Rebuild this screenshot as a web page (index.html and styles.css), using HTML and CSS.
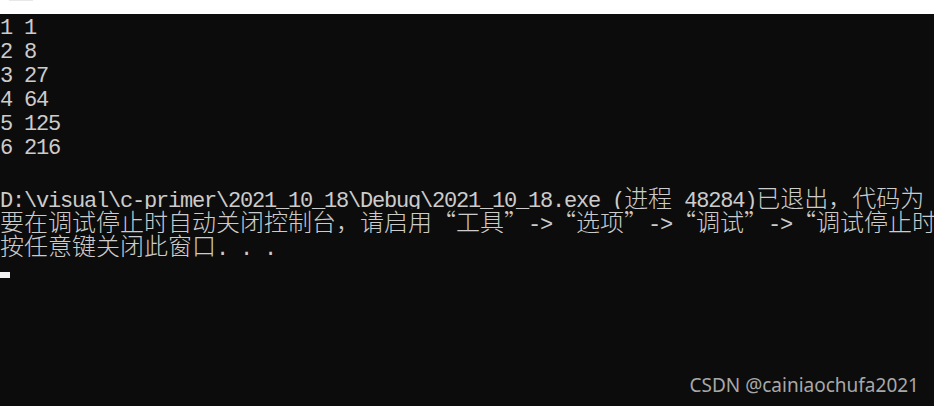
FILE: index.html
```html
<!DOCTYPE html>
<html lang="zh-CN">
<head>
<meta charset="utf-8">
<title>Console</title>
<link rel="stylesheet" href="styles.css">
</head>
<body>
<div class="titlebar"><div class="tab"></div></div>
<main class="console">
<div class="line">1 1</div>
<div class="line">2 8</div>
<div class="line">3 27</div>
<div class="line">4 64</div>
<div class="line">5 125</div>
<div class="line">6 216</div>
<div class="line"></div>
<div class="line">D:\visual\c-primer\2021_10_18\Debug\2021_10_18.exe (<span class="cjk">进程</span> 48284)<span class="cjk">已退出，代码为</span></div>
<div class="line"><span class="cjk">要在调试停止时自动关闭控制台，请启用</span><span class="ql">“</span><span class="cjk">工具</span><span class="qr">”</span>-&gt;<span class="ql">“</span><span class="cjk">选项</span><span class="qr">”</span>-&gt;<span class="ql">“</span><span class="cjk">调试</span><span class="qr">”</span>-&gt;<span class="ql">“</span><span class="cjk">调试停止时关闭控制台</span></div>
<div class="line"><span class="cjk">按任意键关闭此窗口</span>. . .</div>
<div class="line cursor-line"><span class="cursor"></span></div>
</main>
<div class="watermark">CSDN @cainiaochufa2021</div>
</body>
</html>
```
FILE: styles.css
```css
html, body {
  margin: 0;
  padding: 0;
  width: 934px;
  height: 406px;
  overflow: hidden;
  background: #0c0c0c;
}
body {
  position: relative;
}
.titlebar {
  height: 14px;
  background: #ffffff;
  position: relative;
}
.tab {
  margin-left: 9px;
  width: 24px;
  height: 1px;
  background: #e8e8e8;
}
.console {
  padding-top: 3px;
  color: #cccccc;
  font-family: "Liberation Mono", monospace;
  font-size: 22px;
  letter-spacing: -1.2px;
}
.line {
  height: 24px;
  line-height: 24px;
  white-space: pre;
  overflow: hidden;
  width: 934px;
}
.cjk {
  font-family: "Noto Sans CJK SC", sans-serif;
  font-size: 24px;
  letter-spacing: 0;
  font-weight: 300;
}
.ql, .qr {
  display: inline-block;
  width: 24px;
  font-family: "Noto Sans CJK SC", sans-serif;
  font-size: 24px;
  font-weight: 300;
  letter-spacing: 0;
  vertical-align: top;
  height: 24px;
}
.ql { text-align: right; }
.qr { text-align: left; }
.cursor-line {
  display: flex;
  align-items: flex-end;
}
.cursor {
  display: block;
  width: 10px;
  height: 6px;
  background: #f2f2f2;
  margin-bottom: 3px;
}
.watermark {
  position: absolute;
  right: 15px;
  bottom: 8px;
  font-family: "Noto Sans", sans-serif;
  font-size: 19px;
  color: #a8a8a8;
  letter-spacing: 0;
}
```
